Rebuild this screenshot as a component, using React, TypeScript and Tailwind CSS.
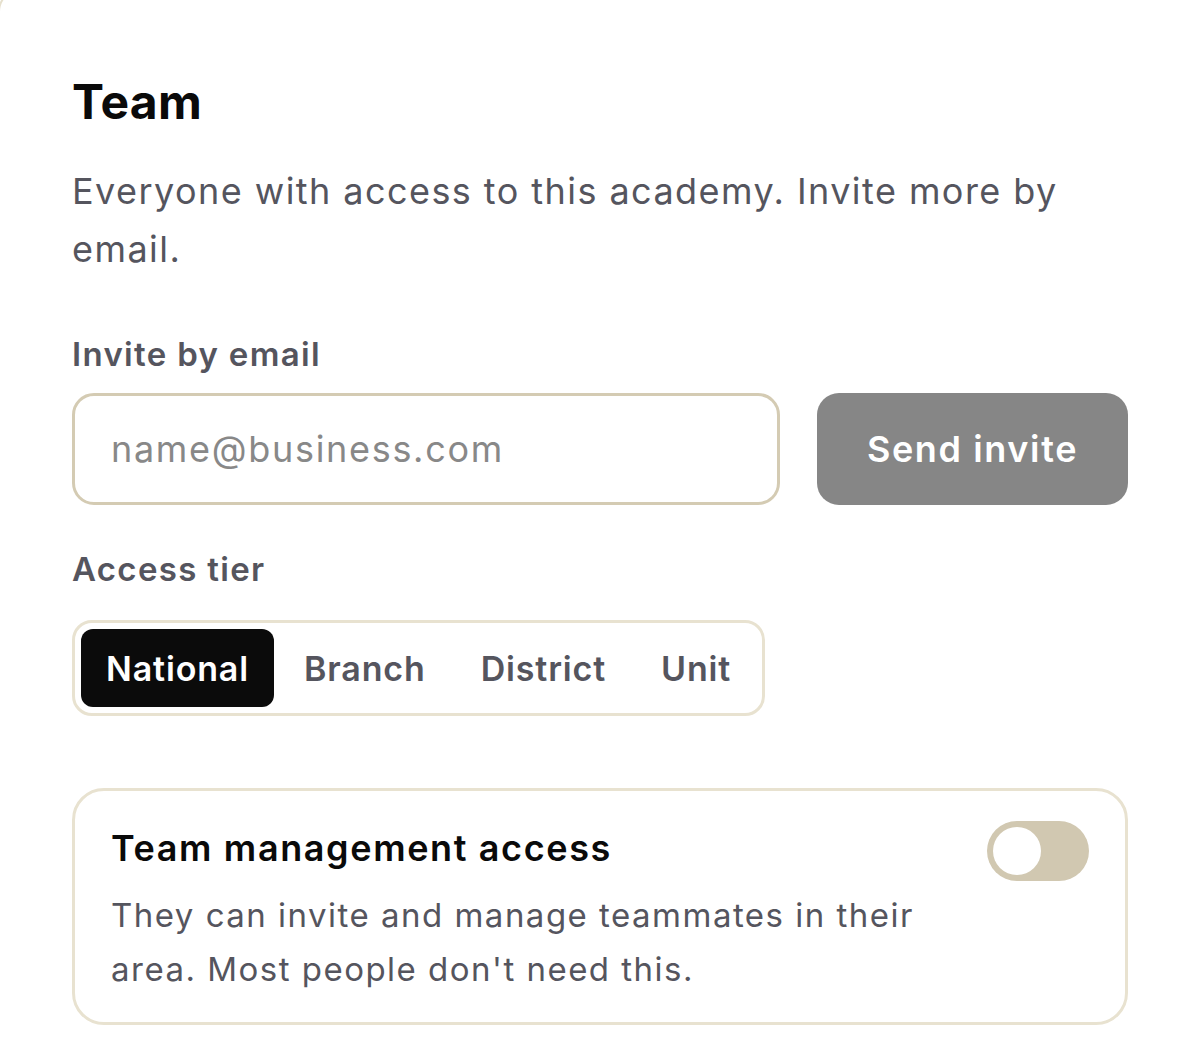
import React, { useState } from "react";

export default function App() {
  const [tier, setTier] = useState("National");
  const tiers = ["National", "Branch", "District", "Unit"];
  return (
    <div className="min-h-screen w-full overflow-hidden bg-white font-['Inter',sans-serif]">
      <div className="-ml-[2px] -mt-[12px] min-h-[1100px] w-[1260px] rounded-[24px] border-2 border-[#e6e0cd] bg-white pl-[72px] pt-[82px]">
        <div className="w-[1056px]">
          <h1 className="text-[48px] font-bold leading-[60px] tracking-[0.005em] text-[#0a0a0a]">Team</h1>
          <p className="mt-[30px] text-[36px] leading-[58px] tracking-[0.04em] text-[#55555e]">
            Everyone with access to this academy. Invite more by email.
          </p>
          <div className="mt-[54px] text-[33px] font-semibold leading-[44px] tracking-[0.04em] text-[#55555e]">
            Invite by email
          </div>
          <div className="mt-[17px] flex gap-[37px]">
            <input
              className="h-[112px] w-[708px] rounded-[22px] border-[3px] border-[#d4cbb3] bg-white px-[36px] text-[36px] tracking-[0.047em] text-[#222] outline-none placeholder:text-[#888888]"
              placeholder="name@business.com"
            />
            <button className="h-[112px] flex-1 rounded-[22px] bg-[#868686] text-[36px] font-semibold tracking-[0.045em] text-white">
              Send invite
            </button>
          </div>
          <div className="mt-[42px] text-[33px] font-semibold leading-[44px] tracking-[0.04em] text-[#55555e]">
            Access tier
          </div>
          <div className="mt-[29px] inline-flex gap-[5px] rounded-[20px] border-[3px] border-[#e8e2d0] px-[6px] py-[6px]">
            {tiers.map((t) => (
              <button
                key={t}
                onClick={() => setTier(t)}
                className={
                  t === tier
                    ? "h-[78px] rounded-[12px] bg-[#0b0b0b] px-[25px] text-[34px] font-semibold tracking-[0.025em] text-white"
                    : "h-[78px] rounded-[12px] px-[25px] text-[34px] font-semibold tracking-[0.025em] text-[#55555e]"
                }
              >
                {t}
              </button>
            ))}
          </div>
          <div className="mt-[72px] flex items-start justify-between rounded-[32px] border-[3px] border-[#e8e2d0] pb-[26px] pl-[36px] pr-[36px] pt-[30px]">
            <div>
              <div className="mt-[2px] text-[36px] font-semibold leading-[50px] tracking-[0.045em] text-[#0a0a0a]">
                Team management access
              </div>
              <p className="mt-[15px] w-[840px] text-[33px] leading-[54px] tracking-[0.045em] text-[#55555e]">
                They can invite and manage teammates in their area. Most people don't need this.
              </p>
            </div>
            <button className="flex h-[60px] w-[102px] shrink-0 items-center rounded-full bg-[#d1c8b1] px-[6px]">
              <span className="h-[48px] w-[48px] rounded-full bg-white" />
            </button>
          </div>
        </div>
      </div>
    </div>
  );
}
